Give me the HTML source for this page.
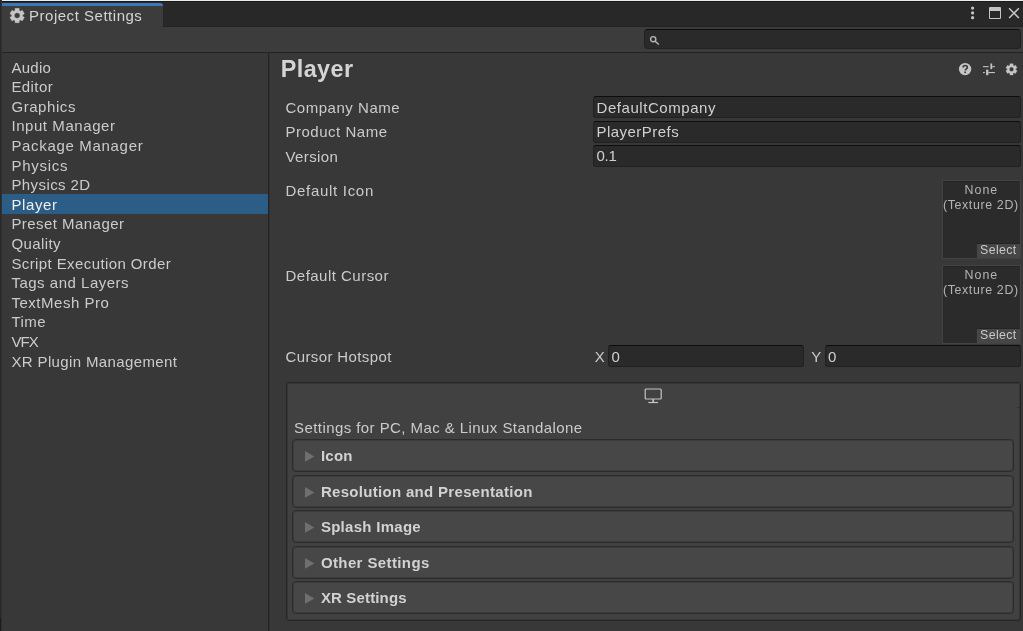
<!DOCTYPE html>
<html>
<head>
<meta charset="utf-8">
<title>Project Settings</title>
<style>
*{box-sizing:border-box;margin:0;padding:0}
html,body{width:1023px;height:631px;overflow:hidden;background:#383838}
body{position:relative;font-family:"Liberation Sans",sans-serif;font-size:14.8px;color:#cbcbcb}
#root{position:absolute;left:0;top:0;width:1023px;height:631px;will-change:transform}
.abs{position:absolute}
.t{position:absolute;white-space:nowrap}
/* window chrome */
#topline{left:0;top:0;width:1023px;height:1px;background:#ececec}
#tabbar{left:0;top:1px;width:1023px;height:26px;background:#282828}
#tabtopdark{left:0;top:1px;width:1023px;height:1px;background:#191919}
#tabbotdark{left:163px;top:26px;width:860px;height:1px;background:#232323}
#leftedge{left:0;top:0;width:2px;height:631px;background:linear-gradient(90deg,#292929 0,#292929 50%,#303030 50%)}
#leftedge2{left:0;top:618px;width:1px;height:13px;background:#1c1c1c}
#tab{left:2px;top:3px;width:161px;height:24px;background:#3c3c3c;border-radius:0 3px 2px 0}
#tabblue{left:2px;top:3px;width:161px;height:3px;background:#3a79bb;border-radius:0 3px 0 0}
#toolbar{left:2px;top:27px;width:1021px;height:25px;background:#3c3c3c}
#toolbarline{left:2px;top:52px;width:1021px;height:1px;background:#232323}
#search{left:644px;top:29px;width:377px;height:20px;background:#2a2a2a;border:1px solid #212121;border-top-color:#0d0d0d;border-radius:4px}
/* sidebar */
#vsep{left:268px;top:53px;width:2px;height:578px;background:linear-gradient(90deg,#242424 0,#242424 50%,#313131 50%)}
#sel{left:2px;top:194px;width:266px;height:20px;background:#2c5d87}
/* content */
.inp{position:absolute;height:22px;background:#2a2a2a;border:1px solid #212121;border-top-color:#0d0d0d;border-radius:3px}
.tex{position:absolute;left:942px;width:79px;height:79px;background:#2b2b2b;border:1px solid #434343;box-shadow:inset 0 1px 0 #252525,inset 1px 0 0 #292929}
.tex .s{position:absolute;right:0;bottom:0;width:44px;height:15px;background:#464646;border-top:1px solid #242424;border-left:1px solid #2e2e2e}
#plat{left:286px;top:382px;width:735px;height:239px;background:#414141;border:1px solid #262626;border-radius:3px;box-shadow:inset 0 0 0 1px rgba(38,38,38,.4)}
.fold{position:absolute;left:292px;width:722px;height:33px;background:#474747;border:1px solid #2c2c2c;border-radius:4px;box-shadow:inset 0 0 0 1px rgba(44,44,44,.4)}
.fold svg{position:absolute;left:11.7px;top:10.9px}
</style>
</head>
<body>
<div id="root">
<div class="abs" id="tabbar"></div>
<div class="abs" id="tabtopdark"></div>
<div class="abs" id="tabbotdark"></div>
<div class="abs" id="toolbar"></div>
<div class="abs" id="toolbarline"></div>
<div class="abs" id="tab"></div>
<div class="abs" id="tabblue"></div>
<div class="abs" id="topline"></div>
<div class="abs" id="leftedge"></div>
<div class="abs" id="leftedge2"></div>

<svg class="abs" style="left:9px;top:7px" width="17" height="17" viewBox="0 0 17 17"><path fill="#c6c6c6" fill-rule="evenodd" stroke="#c6c6c6" stroke-width=".3" stroke-linejoin="round" d="M6.00 3.49L6.08 1.34L10.22 1.34L10.30 3.49A5.50 5.50 0 0 1 11.46 4.16L13.36 3.15L15.43 6.74L13.61 7.88A5.50 5.50 0 0 1 13.61 9.22L15.43 10.36L13.36 13.95L11.46 12.94A5.50 5.50 0 0 1 10.30 13.61L10.22 15.76L6.08 15.76L6.00 13.61A5.50 5.50 0 0 1 4.84 12.94L2.94 13.95L0.87 10.36L2.69 9.22A5.50 5.50 0 0 1 2.69 7.88L0.87 6.74L2.94 3.15L4.84 4.16A5.50 5.50 0 0 1 6.00 3.49ZM10.90 8.55A2.75 2.75 0 1 0 5.40 8.55A2.75 2.75 0 1 0 10.90 8.55Z"/></svg>

<!-- window buttons -->
<svg class="abs" style="left:969px;top:5px" width="8" height="16" viewBox="0 0 8 16"><g fill="#c4c4c4"><circle cx="3.6" cy="3.1" r="1.6"/><circle cx="3.6" cy="7.9" r="1.6"/><circle cx="3.6" cy="12.7" r="1.6"/></g></svg>
<div class="abs" style="left:989px;top:7px;width:12px;height:12px;border:1px solid #c4c4c4;border-top:4px solid #c4c4c4;border-radius:1px"></div>
<svg class="abs" style="left:1008px;top:7px" width="13" height="13" viewBox="0 0 13 13"><path d="M1.1 1.2l9.8 9.8M10.9 1.2l-9.8 9.8" stroke="#c4c4c4" stroke-width="1.45" fill="none"/></svg>

<div class="abs" id="search"></div>
<svg class="abs" style="left:649px;top:35px" width="11" height="11" viewBox="0 0 11 11"><circle cx="4.2" cy="4.2" r="2.6" fill="none" stroke="#b8b8b8" stroke-width="1.4"/><path d="M6.2 6.2l3.6 3.4" stroke="#b8b8b8" stroke-width="1.4" fill="none"/></svg>

<!-- sidebar -->
<div class="abs" id="vsep"></div>
<div class="abs" id="sel"></div>

<!-- header icons -->
<svg class="abs" style="left:958px;top:62px" width="14" height="14" viewBox="0 0 14 14"><circle cx="7.1" cy="7.1" r="6.2" fill="#c4c4c4"/><path d="M5.1 5.6c0-1.3.9-2.1 2.1-2.1s2.1.8 2.1 1.9c0 1.5-2 1.6-2 3.2" fill="none" stroke="#383838" stroke-width="1.7"/><rect x="6.4" y="9.5" width="1.6" height="1.6" fill="#383838"/></svg>
<svg class="abs" style="left:982px;top:62px" width="14" height="14" viewBox="0 0 14 14"><g fill="#c4c4c4"><rect x="1" y="4.1" width="5.6" height="1.1"/><rect x="10.2" y="4.1" width="2.7" height="1.1"/><rect x="8.4" y="1.5" width="1.8" height="5.6"/><rect x="1" y="10" width="1.8" height="1.1"/><rect x="6.4" y="10" width="6.5" height="1.1"/><rect x="4.1" y="7.6" width="2.3" height="5.6"/></g></svg>
<svg class="abs" style="left:1004px;top:62px" width="15" height="15" viewBox="0 0 15 15"><path fill="#c6c6c6" fill-rule="evenodd" stroke="#c6c6c6" stroke-width=".3" stroke-linejoin="round" d="M5.86 3.43L5.90 1.72L9.10 1.72L9.14 3.43A4.20 4.20 0 0 1 10.03 3.95L11.53 3.13L13.13 5.90L11.67 6.79A4.20 4.20 0 0 1 11.67 7.81L13.13 8.70L11.53 11.47L10.03 10.65A4.20 4.20 0 0 1 9.14 11.17L9.10 12.88L5.90 12.88L5.86 11.17A4.20 4.20 0 0 1 4.97 10.65L3.47 11.47L1.87 8.70L3.33 7.81A4.20 4.20 0 0 1 3.33 6.79L1.87 5.90L3.47 3.13L4.97 3.95A4.20 4.20 0 0 1 5.86 3.43ZM9.70 7.30A2.20 2.20 0 1 0 5.30 7.30A2.20 2.20 0 1 0 9.70 7.30Z"/></svg>

<!-- fields -->
<div class="inp" style="left:593px;top:96px;width:428px"></div>
<div class="inp" style="left:593px;top:121px;width:428px"></div>
<div class="inp" style="left:593px;top:145px;width:428px"></div>
<div class="tex" style="top:180px"><div class="s"></div></div>
<div class="tex" style="top:265px"><div class="s"></div></div>
<div class="inp" style="left:608px;top:345px;width:196px"></div>
<div class="inp" style="left:825px;top:345px;width:196px"></div>

<!-- platform box -->
<div class="abs" id="plat"></div>
<div class="abs" style="left:1017px;top:407px;width:3px;height:1px;background:#2e2e2e"></div>
<svg class="abs" style="left:644px;top:388px" width="19" height="16" viewBox="0 0 19 16"><rect x="1.2" y="1" width="16" height="10" rx="1" fill="none" stroke="#c4c4c4" stroke-width="1.2"/><path d="M9.2 11v3.4" stroke="#c4c4c4" stroke-width="1.7" fill="none"/><path d="M4.3 14.5h9.8" stroke="#c4c4c4" stroke-width="1.2" fill="none"/></svg>
<div class="fold" style="top:439px"><svg width="10" height="11" viewBox="0 0 10 11"><path d="M0 0L9.4 5.4L0 10.8Z" fill="#6f6f6f"/></svg></div>
<div class="fold" style="top:475px"><svg width="10" height="11" viewBox="0 0 10 11"><path d="M0 0L9.4 5.4L0 10.8Z" fill="#6f6f6f"/></svg></div>
<div class="fold" style="top:510px"><svg width="10" height="11" viewBox="0 0 10 11"><path d="M0 0L9.4 5.4L0 10.8Z" fill="#6f6f6f"/></svg></div>
<div class="fold" style="top:546px"><svg width="10" height="11" viewBox="0 0 10 11"><path d="M0 0L9.4 5.4L0 10.8Z" fill="#6f6f6f"/></svg></div>
<div class="fold" style="top:581px"><svg width="10" height="11" viewBox="0 0 10 11"><path d="M0 0L9.4 5.4L0 10.8Z" fill="#6f6f6f"/></svg></div>

<!-- texts -->
<div class="t" style="left:29px;top:5px;line-height:21px;height:21px;font-size:15.0px;letter-spacing:0.52px;color:#d4d4d4">Project Settings</div>
<div class="t" style="left:11.4px;top:57px;line-height:21px;height:21px;font-size:15.0px;letter-spacing:0.3px;color:#cbcbcb">Audio</div>
<div class="t" style="left:11.4px;top:76px;line-height:21px;height:21px;font-size:15.0px;letter-spacing:0.42px;color:#cbcbcb">Editor</div>
<div class="t" style="left:11.4px;top:96px;line-height:21px;height:21px;font-size:15.0px;letter-spacing:0.57px;color:#cbcbcb">Graphics</div>
<div class="t" style="left:11.4px;top:115px;line-height:21px;height:21px;font-size:15.0px;letter-spacing:0.57px;color:#cbcbcb">Input Manager</div>
<div class="t" style="left:11.4px;top:135px;line-height:21px;height:21px;font-size:15.0px;letter-spacing:0.68px;color:#cbcbcb">Package Manager</div>
<div class="t" style="left:11.4px;top:155px;line-height:21px;height:21px;font-size:15.0px;letter-spacing:0.73px;color:#cbcbcb">Physics</div>
<div class="t" style="left:11.4px;top:174px;line-height:21px;height:21px;font-size:15.0px;letter-spacing:0.42px;color:#cbcbcb">Physics 2D</div>
<div class="t" style="left:11.4px;top:194px;line-height:21px;height:21px;font-size:15.0px;letter-spacing:0.62px;color:#efefef">Player</div>
<div class="t" style="left:11.4px;top:213px;line-height:21px;height:21px;font-size:15.0px;letter-spacing:0.45px;color:#cbcbcb">Preset Manager</div>
<div class="t" style="left:11.4px;top:233px;line-height:21px;height:21px;font-size:15.0px;letter-spacing:0.42px;color:#cbcbcb">Quality</div>
<div class="t" style="left:11.4px;top:253px;line-height:21px;height:21px;font-size:15.0px;letter-spacing:0.4px;color:#cbcbcb">Script Execution Order</div>
<div class="t" style="left:11.4px;top:272px;line-height:21px;height:21px;font-size:15.0px;letter-spacing:0.51px;color:#cbcbcb">Tags and Layers</div>
<div class="t" style="left:11.4px;top:292px;line-height:21px;height:21px;font-size:15.0px;letter-spacing:0.53px;color:#cbcbcb">TextMesh Pro</div>
<div class="t" style="left:11.4px;top:311px;line-height:21px;height:21px;font-size:15.0px;letter-spacing:0.47px;color:#cbcbcb">Time</div>
<div class="t" style="left:11.4px;top:331px;line-height:21px;height:21px;font-size:15.0px;letter-spacing:-0.9px;color:#cbcbcb">VFX</div>
<div class="t" style="left:11.4px;top:351px;line-height:21px;height:21px;font-size:15.0px;letter-spacing:0.37px;color:#cbcbcb">XR Plugin Management</div>
<div class="t" style="left:280.7px;top:54px;line-height:30px;height:30px;font-size:23.4px;letter-spacing:0.44px;color:#d4d4d4;font-weight:bold">Player</div>
<div class="t" style="left:285.5px;top:97px;line-height:21px;height:21px;font-size:15.0px;letter-spacing:0.52px;color:#cbcbcb">Company Name</div>
<div class="t" style="left:285.5px;top:121px;line-height:21px;height:21px;font-size:15.0px;letter-spacing:0.51px;color:#cbcbcb">Product Name</div>
<div class="t" style="left:285.5px;top:146px;line-height:21px;height:21px;font-size:15.0px;letter-spacing:0.38px;color:#cbcbcb">Version</div>
<div class="t" style="left:285.5px;top:180px;line-height:21px;height:21px;font-size:15.0px;letter-spacing:0.7px;color:#cbcbcb">Default Icon</div>
<div class="t" style="left:285.5px;top:265px;line-height:21px;height:21px;font-size:15.0px;letter-spacing:0.48px;color:#cbcbcb">Default Cursor</div>
<div class="t" style="left:285.5px;top:346px;line-height:21px;height:21px;font-size:15.0px;letter-spacing:0.38px;color:#cbcbcb">Cursor Hotspot</div>
<div class="t" style="left:596.5px;top:97px;line-height:21px;height:21px;font-size:15.0px;letter-spacing:0.56px;color:#d0d0d0">DefaultCompany</div>
<div class="t" style="left:596.5px;top:121px;line-height:21px;height:21px;font-size:15.0px;letter-spacing:0.47px;color:#d0d0d0">PlayerPrefs</div>
<div class="t" style="left:596.5px;top:145px;line-height:21px;height:21px;font-size:15.0px;letter-spacing:-0.3px;color:#d0d0d0">0.1</div>
<div class="t" style="left:594.7px;top:346px;line-height:21px;height:21px;font-size:15.0px;letter-spacing:0px;color:#cbcbcb">X</div>
<div class="t" style="left:611.6px;top:346px;line-height:21px;height:21px;font-size:15.0px;letter-spacing:0px;color:#d0d0d0">0</div>
<div class="t" style="left:811.2px;top:346px;line-height:21px;height:21px;font-size:15.0px;letter-spacing:0px;color:#cbcbcb">Y</div>
<div class="t" style="left:828.1px;top:346px;line-height:21px;height:21px;font-size:15.0px;letter-spacing:0px;color:#d0d0d0">0</div>
<div class="t" style="left:294px;top:417px;line-height:21px;height:21px;font-size:15.0px;letter-spacing:0.43px;color:#cbcbcb">Settings for PC, Mac &amp; Linux Standalone</div>
<div class="t" style="left:320.9px;top:445px;line-height:21px;height:21px;font-size:15.0px;letter-spacing:0.27px;color:#d2d2d2;font-weight:bold">Icon</div>
<div class="t" style="left:320.9px;top:481px;line-height:21px;height:21px;font-size:15.0px;letter-spacing:0.31px;color:#d2d2d2;font-weight:bold">Resolution and Presentation</div>
<div class="t" style="left:320.9px;top:516px;line-height:21px;height:21px;font-size:15.0px;letter-spacing:0.28px;color:#d2d2d2;font-weight:bold">Splash Image</div>
<div class="t" style="left:320.9px;top:552px;line-height:21px;height:21px;font-size:15.0px;letter-spacing:0.39px;color:#d2d2d2;font-weight:bold">Other Settings</div>
<div class="t" style="left:320.9px;top:587px;line-height:21px;height:21px;font-size:15.0px;letter-spacing:0.15px;color:#d2d2d2;font-weight:bold">XR Settings</div>
<div class="t" style="left:964.6px;top:181px;line-height:18px;height:18px;font-size:12.4px;letter-spacing:1.0px;color:#b4b4b4">None</div>
<div class="t" style="left:942.9px;top:196px;line-height:18px;height:18px;font-size:12.4px;letter-spacing:0.64px;color:#b4b4b4">(Texture 2D)</div>
<div class="t" style="left:980.1px;top:241px;line-height:18px;height:18px;font-size:12.4px;letter-spacing:0.34px;color:#c8c8c8">Select</div>
<div class="t" style="left:964.6px;top:266px;line-height:18px;height:18px;font-size:12.4px;letter-spacing:1.0px;color:#b4b4b4">None</div>
<div class="t" style="left:942.9px;top:281px;line-height:18px;height:18px;font-size:12.4px;letter-spacing:0.64px;color:#b4b4b4">(Texture 2D)</div>
<div class="t" style="left:980.1px;top:326px;line-height:18px;height:18px;font-size:12.4px;letter-spacing:0.34px;color:#c8c8c8">Select</div>
</div>
</body>
</html>
